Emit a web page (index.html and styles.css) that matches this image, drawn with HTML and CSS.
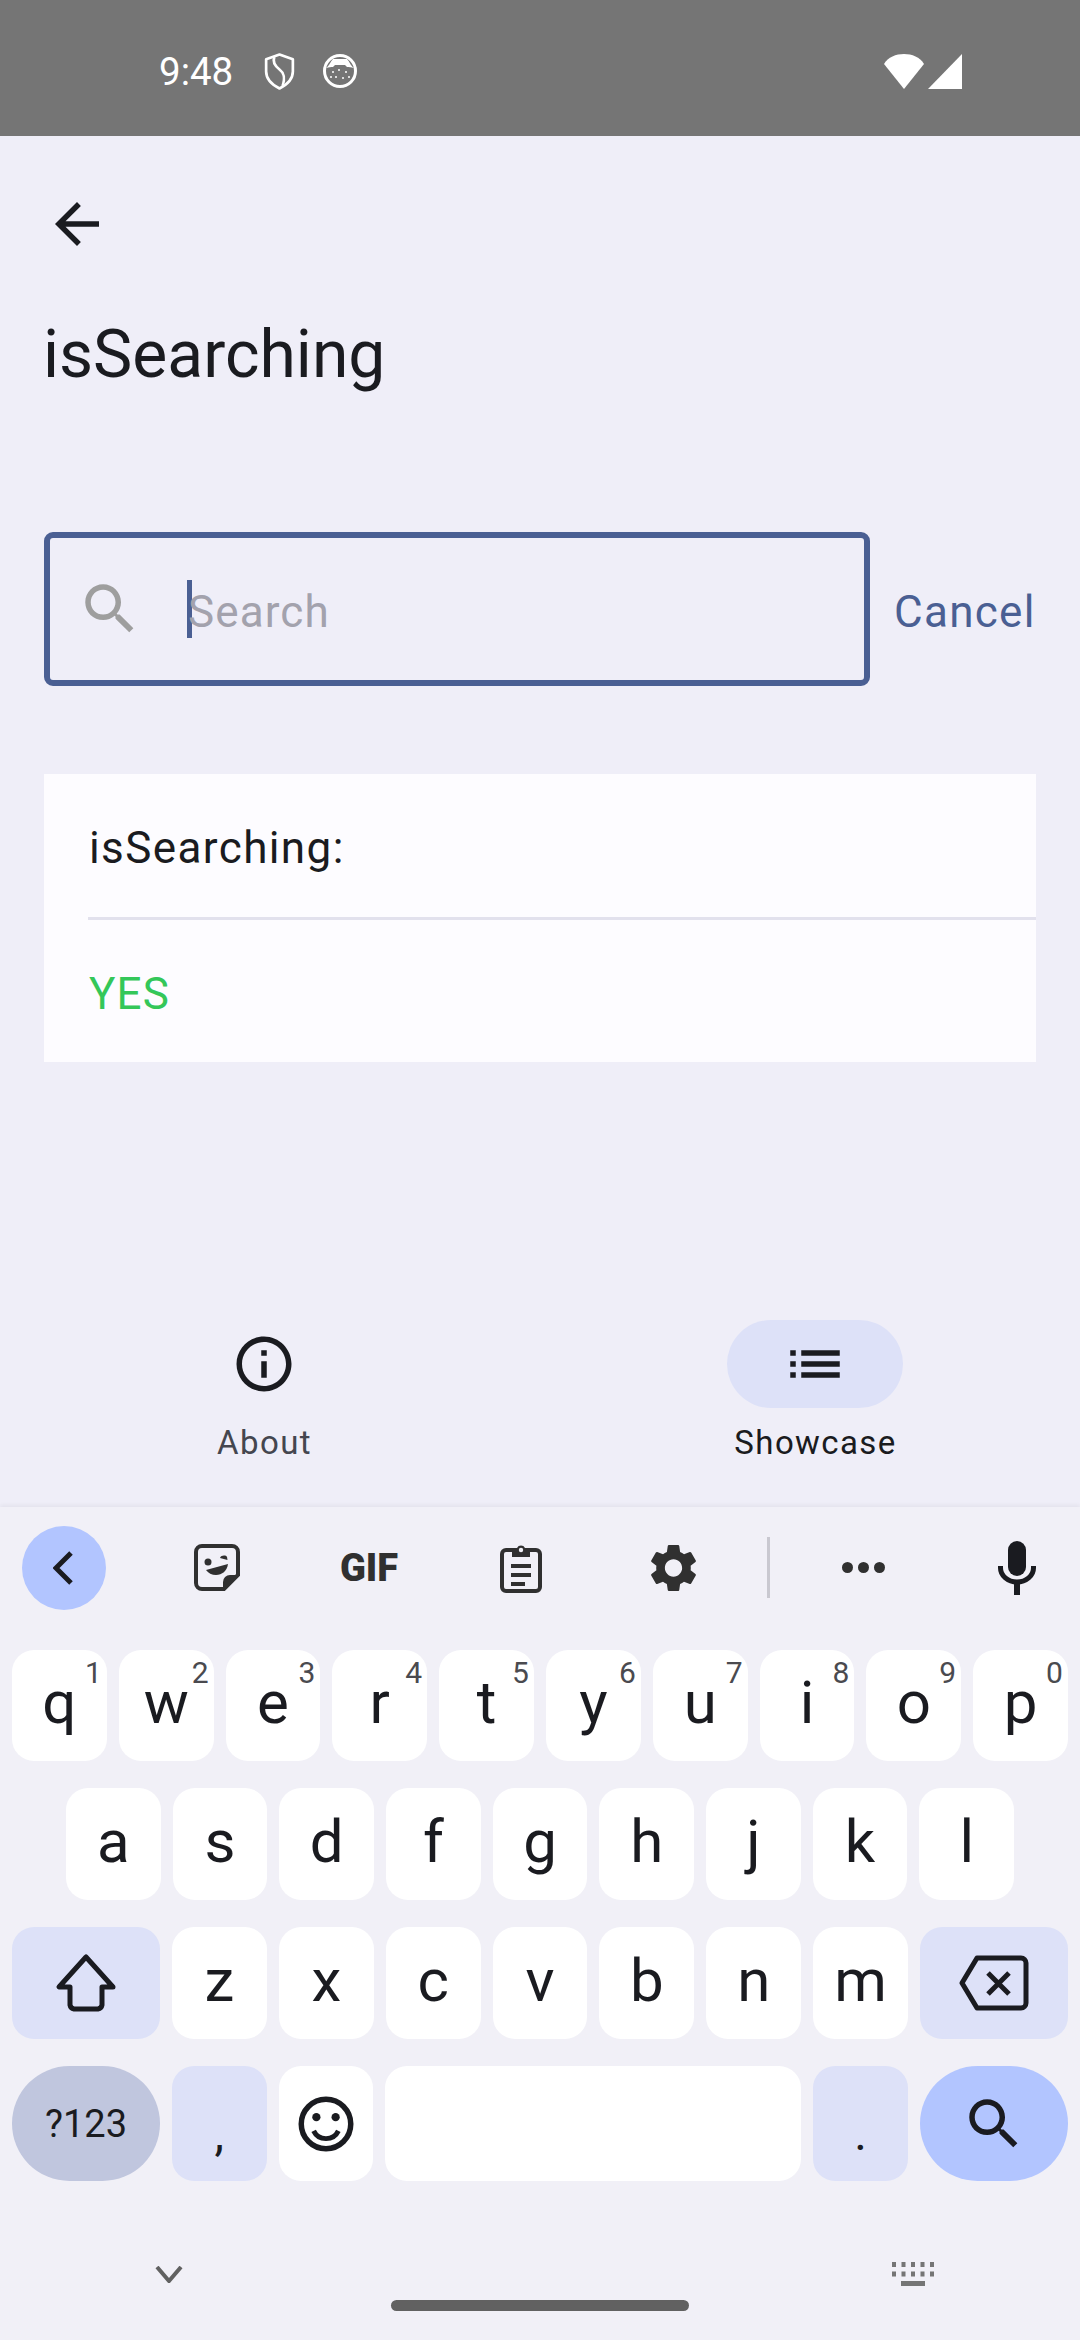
FILE: index.html
```html
<!DOCTYPE html>
<html lang="en">
<head>
<meta charset="utf-8">
<title>isSearching</title>
<link rel="stylesheet" href="styles.css">
</head>
<body>
<div class="screen">
  <header class="status">
    <span class="time">9:48</span>
    <svg class="st-shield" viewBox="0 0 30 36"><path d="M15 1.500 28 6v12c0 8-6 13-13 16.500C8 31 2 26 2 18V6z" fill="none" stroke="#fff" stroke-width="2.600" stroke-linejoin="round"/><path d="M10 4c-2 5 1 9 5 12 4 3 6 7 3 16" fill="none" stroke="#fff" stroke-width="2.600"/></svg>
    <svg class="st-round" viewBox="0 0 34 34"><circle cx="17" cy="17" r="15.500" fill="none" stroke="#fff" stroke-width="3"/><path d="M3 14C7 11 7 8 10 5h14c3 3 3 6 7 9-3-1-5-1-7-1l-2-2H12l-2 2c-2 0-4 0-7 1z" fill="#fff"/><g fill="#fff"><circle cx="10" cy="18" r="1"/><circle cx="16" cy="16" r="1"/><circle cx="23" cy="18" r="1"/><circle cx="13" cy="23" r="1"/><circle cx="20" cy="24" r="1"/><circle cx="26" cy="23" r="1"/><circle cx="8" cy="23" r="1"/></g></svg>
    <span class="st-space"></span>
    <svg class="st-wifi" viewBox="0 0 42 35"><path d="M21 35 1 10C5 3 13 0 21 0s16 3 20 10z" fill="#fff"/></svg>
    <svg class="st-signal" viewBox="0 0 34 35"><path d="M34 0v35H0z" fill="#fff"/></svg>
  </header>

  <main class="app">
    <div class="backrow">
      <svg class="ic-66" viewBox="0 0 24 24"><path fill="#1a1b20" d="M20 11H7.830l5.590-5.590L12 4l-8 8 8 8 1.410-1.410L7.830 13H20v-2z"/></svg>
    </div>
    <h1 class="title">isSearching</h1>

    <div class="searchrow">
      <div class="searchbox">
        <svg class="ic-66" viewBox="0 0 24 24"><path fill="#9e9e9e" d="M15.500 14h-.79l-.28-.27C15.410 12.590 16 11.110 16 9.500 16 5.910 13.090 3 9.500 3S3 5.910 3 9.500 5.910 16 9.500 16c1.610 0 3.090-.59 4.230-1.570l.27.28v.79l5 4.990L20.490 19l-4.990-5zm-6 0C7.010 14 5 11.990 5 9.500S7.010 5 9.500 5 14 7.010 14 9.500 11.990 14 9.500 14z"/></svg>
        <span class="caret"></span>
        <span class="placeholder">Search</span>
      </div>
      <span class="cancel">Cancel</span>
    </div>

    <section class="card">
      <div class="card-row">isSearching:</div>
      <div class="divider"></div>
      <div class="card-row yes">YES</div>
    </section>
  </main>

  <nav class="bottomnav">
    <div class="tab">
      <div class="pill"><svg class="ic-66" viewBox="0 0 24 24"><path fill="#1a1b20" d="M11 7h2v2h-2zm0 4h2v6h-2zm1-9C6.480 2 2 6.480 2 12s4.480 10 10 10 10-4.480 10-10S17.520 2 12 2zm0 18c-4.410 0-8-3.590-8-8s3.590-8 8-8 8 3.590 8 8-3.590 8-8 8z"/></svg></div>
      <span class="tab-label muted">About</span>
    </div>
    <div class="tab">
      <div class="pill active"><svg class="ic-66" viewBox="0 0 24 24"><path fill="#1a1b20" d="M3 13h2v-2H3v2zm0 4h2v-2H3v2zm0-8h2V7H3v2zm4 4h14v-2H7v2zm0 4h14v-2H7v2zM7 7v2h14V7H7z"/></svg></div>
      <span class="tab-label">Showcase</span>
    </div>
  </nav>

  <section class="keyboard">
    <div class="toolbar">
      <div class="tb-back"><svg class="tb-chev" viewBox="0 0 20 34"><path d="M18 2 3 17l15 15" fill="none" stroke="#1a1b20" stroke-width="5"/></svg></div>
      <div class="slot"><svg class="tb-sticker" viewBox="0 0 46 47"><path d="M8 2h30a6 6 0 0 1 6 6v23L30 45H8a6 6 0 0 1-6-6V8a6 6 0 0 1 6-6z" fill="none" stroke="#303030" stroke-width="4"/><path d="M44 31H36a7 7 0 0 0-7 7v8z" fill="#303030"/><path d="M12 26l22-6c-1 7-6 11-12 11-4 0-8-2-10-5z" fill="#303030"/><circle cx="14" cy="18" r="3.500" fill="#303030"/><path d="M26 14c1-3 6-3 7-1l.5 3z" fill="#303030"/></svg></div>
      <div class="slot"><span class="gif">GIF</span></div>
      <div class="slot"><svg class="tb-clip" viewBox="0 0 42 50"><path d="M13 7H6a4 4 0 0 0-4 4v33a4 4 0 0 0 4 4h30a4 4 0 0 0 4-4V11a4 4 0 0 0-4-4h-7" fill="none" stroke="#303030" stroke-width="4"/><path d="M12 14V5h5a4.500 4.500 0 0 1 8 0h5v9z" fill="#303030"/><circle cx="21" cy="7" r="2.200" fill="#f1f0f7"/><path d="M11 21h20v4H11zm0 9h20v4H11zm0 9h14v4H11z" fill="#303030"/></svg></div>
      <div class="slot"><svg class="tb-gear" viewBox="2.700 2 18.600 20"><path fill="#303030" d="M19.140 12.940c.04-.3.060-.61.060-.94 0-.32-.02-.64-.07-.94l2.030-1.580c.18-.14.230-.41.120-.61l-1.920-3.320c-.12-.22-.37-.29-.59-.22l-2.390.96c-.5-.38-1.030-.7-1.620-.94l-.36-2.540c-.04-.24-.24-.41-.48-.41h-3.840c-.24 0-.43.170-.47.41l-.36 2.540c-.59.24-1.130.57-1.620.94l-2.390-.96c-.22-.08-.47 0-.59.22L2.740 8.870c-.12.210-.08.470.12.610l2.030 1.580c-.05.3-.09.630-.09.940s.02.640.07.940l-2.030 1.580c-.18.14-.23.410-.12.610l1.920 3.320c.12.220.37.290.59.220l2.390-.96c.5.380 1.030.7 1.620.94l.36 2.540c.05.240.24.410.48.410h3.840c.24 0 .44-.17.470-.41l.36-2.540c.59-.24 1.130-.56 1.620-.94l2.390.96c.22.080.47 0 .59-.22l1.920-3.320c.12-.22.070-.47-.12-.61l-2.010-1.580zM12 15.600c-1.980 0-3.600-1.620-3.600-3.600s1.620-3.600 3.600-3.600 3.600 1.620 3.600 3.600-1.620 3.600-3.600 3.600z"/></svg></div>
      <span class="tb-divider"></span>
      <div class="slot dots"><i></i><i></i><i></i></div>
      <div class="tb-mic"><svg class="tb-micic" viewBox="0 0 38 54"><rect x="10" y="0" width="18" height="35" rx="9" fill="#1a1b20"/><path d="M2.500 25v2a16.500 14 0 0 0 33 0v-2" fill="none" stroke="#1a1b20" stroke-width="5"/><path d="M16 40h6v14h-6z" fill="#1a1b20"/></svg></div>
    </div>

    <div class="keys">
      <div class="row row-top">
        <div class="key">q<sup class="hint">1</sup></div>
        <div class="key">w<sup class="hint">2</sup></div>
        <div class="key">e<sup class="hint">3</sup></div>
        <div class="key">r<sup class="hint">4</sup></div>
        <div class="key">t<sup class="hint">5</sup></div>
        <div class="key">y<sup class="hint">6</sup></div>
        <div class="key">u<sup class="hint">7</sup></div>
        <div class="key">i<sup class="hint">8</sup></div>
        <div class="key">o<sup class="hint">9</sup></div>
        <div class="key">p<sup class="hint">0</sup></div>
      </div>
      <div class="row row-home">
        <div class="key">a</div><div class="key">s</div><div class="key">d</div><div class="key">f</div><div class="key">g</div><div class="key">h</div><div class="key">j</div><div class="key">k</div><div class="key">l</div>
      </div>
      <div class="row">
        <div class="key wide tint icon"><svg class="k-shift" viewBox="0 0 62 60"><path d="M31 4 4 34h11v18a5 5 0 0 0 4 4h24a5 5 0 0 0 4-4V34h11z" fill="none" stroke="#1a1b20" stroke-width="5" stroke-linejoin="round"/></svg></div>
        <div class="key">z</div><div class="key">x</div><div class="key">c</div><div class="key">v</div><div class="key">b</div><div class="key">n</div><div class="key">m</div>
        <div class="key wide tint icon"><svg class="k-back" viewBox="0 0 70 56"><path d="M18 3h44a5 5 0 0 1 5 5v40a5 5 0 0 1-5 5H18L3 28z" fill="none" stroke="#1a1b20" stroke-width="5" stroke-linejoin="round"/><path d="M29 18l21 21M50 18 29 39" stroke="#1a1b20" stroke-width="5"/></svg></div>
      </div>
      <div class="row row-bottom">
        <div class="key wide round sym icon">?123</div>
        <div class="key tint punct">,</div>
        <div class="key icon"><svg class="ic-66" viewBox="0 0 24 24"><circle cx="12" cy="12" r="9" fill="none" stroke="#1a1b20" stroke-width="2"/><circle cx="8.500" cy="9.500" r="1.500" fill="#1a1b20"/><circle cx="15.500" cy="9.500" r="1.500" fill="#1a1b20"/><path d="M7.500 14.500a5 5 0 0 0 9 0" fill="none" stroke="#1a1b20" stroke-width="1.800"/></svg></div>
        <div class="key space icon"></div>
        <div class="key tint punct">.</div>
        <div class="key wide round accent icon"><svg class="ic-66" viewBox="0 0 24 24"><path fill="#1a1b20" d="M15.500 14h-.79l-.28-.27C15.410 12.590 16 11.110 16 9.500 16 5.910 13.090 3 9.500 3S3 5.910 3 9.500 5.910 16 9.500 16c1.610 0 3.090-.59 4.230-1.570l.27.28v.79l5 4.990L20.490 19l-4.990-5zm-6 0C7.010 14 5 11.990 5 9.500S7.010 5 9.500 5 14 7.010 14 9.500 11.990 14 9.500 14z"/></svg></div>
      </div>
    </div>

    <div class="navrow">
      <svg class="nav-chev" viewBox="0 0 28 17"><path d="M2 1l12 14L26 1" fill="none" stroke="#616161" stroke-width="4"/></svg>
      <svg class="nav-kbd" viewBox="0 0 42 24"><g fill="#757575"><path d="M0 0h4v5H0zm9.500 0h4v5h-4zM19 0h4v5h-4zm9.500 0h4v5h-4zM38 0h4v5h-4zM0 9.500h4v5H0zm9.500 0h4v5h-4zm9.500 0h4v5h-4zm9.500 0h4v5h-4zm9.500 0h4v5h-4zM9 19h24v5H9z"/></g></svg>
    </div>
    <div class="homebar"></div>
  </section>
</div>
</body>
</html>
```
FILE: styles.css
```css
* { box-sizing: border-box; }
html, body { margin: 0; padding: 0; }
body { font-family: Roboto, "Liberation Sans", sans-serif; color: #1a1b20; }
svg { display: block; flex: none; }

.screen { width: 1080px; height: 2340px; display: flex; flex-direction: column; background: #efeef8; overflow: hidden; }

.status { height: 136px; flex: none; background: #757575; display: flex; align-items: center; padding: 0 118px 0 159px; color: #fff; }
.time { font-size: 38.500px; line-height: 44px; margin-right: 33px; margin-top: 7px; }
.st-shield { width: 31px; height: 37px; margin-top: 6px; margin-right: 28px; margin-left: -2px; }
.st-round { width: 34px; height: 34px; margin-top: 6px; }
.st-space { flex: 1; }
.st-wifi { width: 42px; height: 35px; margin-top: 6px; margin-right: 3px; }
.st-signal { width: 34px; height: 35px; margin-top: 6px; }

.app { flex: 1; display: flex; flex-direction: column; min-height: 0; }
.ic-66 { width: 66px; height: 66px; }
.backrow { padding: 55px 0 0 44px; }
.title { margin: 60px 0 0; padding-left: 43px; font-size: 66px; font-weight: 400; line-height: 76px; }

.searchrow { display: flex; align-items: center; margin-top: 139px; padding-left: 44px; }
.searchbox { width: 826px; height: 154px; border: 6px solid #4a5f93; border-radius: 9px; display: flex; align-items: center; padding-left: 27px; }
.caret { width: 5px; height: 58px; background: #4a5f93; margin-left: 44px; margin-right: -4px; }
.placeholder { font-size: 44px; letter-spacing: 1.100px; color: #a3a2ad; padding-top: 5px; }
.cancel { font-size: 44px; letter-spacing: 1.300px; color: #4a5f93; margin-left: 24px; padding-top: 5px; }

.card { margin: 88px 44px 0; background: #fdfcff; display: flex; flex-direction: column; }
.card-row { height: 143px; padding: 4px 0 0 45px; display: flex; align-items: center; font-size: 44px; letter-spacing: 1.400px; }
.divider { height: 3px; margin-left: 44px; background: #e2e1ed; }
.card-row.yes { height: 142px; padding-top: 6px; color: #34c759; letter-spacing: 1.100px; }

.bottomnav { flex: none; height: 187px; display: flex; gap: 375px; padding-left: 176px; }
.tab { width: 176px; display: flex; flex-direction: column; align-items: center; }
.pill { width: 176px; height: 88px; border-radius: 44px; display: flex; align-items: center; justify-content: center; }
.pill.active { background: #dde1f8; }
.tab-label { font-size: 33px; letter-spacing: 1.400px; font-weight: 400; line-height: 40px; margin-top: 15px; margin-left: 1px; }
.tab-label.muted { color: #44464f; }

.keyboard { flex: none; height: 833px; background: #f1f0f7; box-shadow: 0 -2px 4px rgba(0,0,0,.05); display: flex; flex-direction: column; }

.toolbar { height: 143px; flex: none; display: flex; align-items: center; padding: 0 0 22px 22px; }
.tb-back { width: 84px; height: 84px; border-radius: 42px; background: #b2c5ff; margin-right: 35px; display: flex; align-items: center; justify-content: center; }
.tb-chev { width: 20px; height: 34px; margin-right: 2px; }
.slot { width: 152px; display: flex; align-items: center; justify-content: center; }
.tb-sticker { width: 46px; height: 47px; }
.gif { font-size: 38px; font-weight: 900; line-height: 40px; color: #303030; }
.tb-clip { width: 42px; height: 50px; }
.tb-gear { width: 45px; height: 48px; }
.tb-divider { width: 3px; height: 61px; background: #c9c8d0; margin-left: 18px; margin-right: 17px; }
.dots { gap: 5px; }
.dots i { width: 11px; height: 11px; border-radius: 50%; background: #303030; display: block; }
.tb-mic { margin-left: 59px; }
.tb-micic { width: 38px; height: 54px; }

.keys { flex: none; display: flex; flex-direction: column; gap: 27px; padding: 0 12px; }
.row { display: flex; gap: 12px; height: 112px; }
.row-top { height: 111px; }
.row-home { padding: 0 54px; }
.row-bottom { height: 115px; }
.key { flex: 1 1 0; min-width: 0; background: #fff; border-radius: 22px; display: flex; align-items: center; justify-content: center; font-size: 60px; position: relative; padding-bottom: 6px; }
.key.icon { padding-bottom: 0; }
.hint { position: absolute; top: 5px; right: 5px; font-size: 30px; line-height: 36px; color: #4a4a4f; vertical-align: baseline; }
.key.wide { flex: none; width: 148px; }
.key.tint { background: #dde1f8; }
.key.space { flex: none; width: 416px; }
.key.round { border-radius: 58px; }
.key.sym { background: #c0c6de; font-size: 38px; }
.key.accent { background: #b2c5ff; }
.key.punct { font-size: 48px; padding: 20px 0 0; }
.k-shift { width: 62px; height: 60px; }
.k-back { width: 70px; height: 56px; }

.navrow { display: flex; justify-content: space-between; align-items: center; height: 24px; margin-top: 81px; padding: 0 146px 0 155px; }
.nav-chev { width: 28px; height: 17px; }
.nav-kbd { width: 42px; height: 24px; }
.homebar { width: 298px; height: 11px; border-radius: 6px; background: #616161; margin: 14px auto 0; }
```
